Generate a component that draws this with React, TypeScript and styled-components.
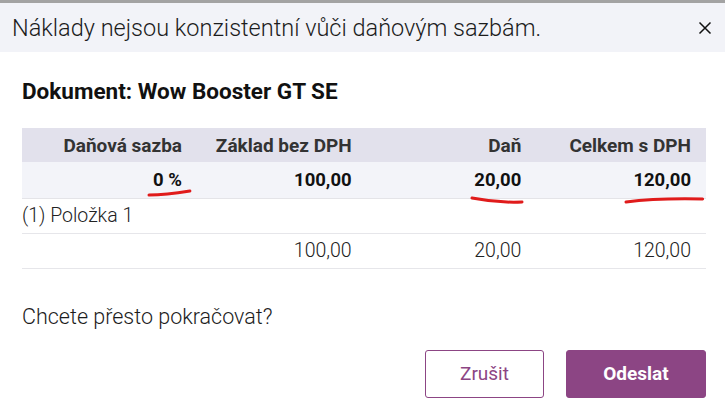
import styled, { createGlobalStyle } from 'styled-components'

const GlobalStyle = createGlobalStyle`
  body {
    margin: 0;
    background: #fff;
    font-family: Roboto, "Liberation Sans", sans-serif;
    color: #222;
  }
`

const Dialog = styled.div`
  width: 725px;
  height: 419px;
  border-top: 3px solid #a3a3a3;
  box-sizing: border-box;
  display: flex;
  flex-direction: column;
`

const Header = styled.div`
  height: 49px;
  background: #f2f3f8;
  display: flex;
  align-items: center;
  justify-content: space-between;
  padding: 0 12px 0 12px;
  h1 {
    margin: 0;
    font-size: 23.5px;
    font-weight: 300;
    color: #1c1c1c;
  }
`

const Close = styled.button`
  border: 0;
  background: transparent;
  padding: 0;
  width: 16px;
  height: 16px;
  display: flex;
  cursor: pointer;
`

const Body = styled.div`
  padding: 25px 19px 0 22px;
  h2 {
    margin: 0 0 22px;
    font-size: 22.5px;
    font-weight: 700;
    color: #111;
    line-height: 29px;
  }
`

const Table = styled.table`
  width: 684px;
  border-collapse: collapse;
  table-layout: fixed;
  td, th {
    text-align: right;
    padding: 0 15px 0 0;
    white-space: nowrap;
  }
  col:first-child { width: 175px; }
`

const HeadRow = styled.tr`
  background: #e2e1ec;
  height: 34px;
  th {
    font-size: 19px;
    font-weight: 700;
    color: #333;
  }
`

const SumRow = styled.tr`
  background: #f3f4f9;
  height: 36px;
  border-bottom: 1px solid #e4e4e8;
  td {
    font-size: 18.5px;
    font-weight: 700;
    color: #111;
  }
`

const Row = styled.tr`
  height: 35px;
  border-bottom: 1px solid #e6e6ea;
  td {
    font-size: 19.5px;
    font-weight: 300;
    color: #222;
  }
`

const ItemCell = styled.td`
  && { text-align: left; padding-left: 0; }
`

const Mark = styled.span<{ $l: number; $r: number; $b: number }>`
  position: relative;
  display: inline-block;
  svg {
    position: absolute;
    left: -${p => p.$l}px;
    bottom: -${p => p.$b}px;
    width: calc(100% + ${p => p.$l + p.$r}px);
    height: 6px;
    overflow: visible;
  }
`

const Question = styled.p`
  margin: 35px 0 0;
  font-size: 21.5px;
  font-weight: 300;
  color: #1c1c1c;
`

const Actions = styled.div`
  display: flex;
  justify-content: flex-end;
  gap: 22px;
  margin-top: 21px;
`

const Button = styled.button<{ $primary?: boolean }>`
  height: 48px;
  width: ${p => (p.$primary ? '140px' : '119px')};
  border-radius: 3px;
  border: 1px solid #8c4584;
  background: ${p => (p.$primary ? '#8c4584' : '#fff')};
  color: ${p => (p.$primary ? '#fff' : '#8c4584')};
  font-family: Roboto, "Liberation Sans", sans-serif;
  font-size: 19px;
  font-weight: ${p => (p.$primary ? 700 : 400)};
  cursor: pointer;
`

function Underline({ bend }: { bend: string }) {
  return (
    <svg viewBox="0 0 100 6" preserveAspectRatio="none">
      <path d={bend} stroke="#e01b1b" strokeWidth="3" fill="none" strokeLinecap="round" vectorEffect="non-scaling-stroke" />
    </svg>
  )
}

export default function App() {
  return (
    <>
      <GlobalStyle />
      <Dialog>
        <Header>
          <h1>Náklady nejsou konzistentní vůči daňovým sazbám.</h1>
          <Close aria-label="zavřít">
            <svg width="16" height="16" viewBox="0 0 16 16">
              <path d="M2.5 2.5 L13.5 13.5 M13.5 2.5 L2.5 13.5" stroke="#111" strokeWidth="1.5" />
            </svg>
          </Close>
        </Header>
        <Body>
          <h2>Dokument: Wow Booster GT SE</h2>
          <Table>
            <colgroup>
              <col />
              <col />
              <col />
              <col />
            </colgroup>
            <thead>
              <HeadRow>
                <th>Daňová sazba</th>
                <th>Základ bez DPH</th>
                <th>Daň</th>
                <th>Celkem s DPH</th>
              </HeadRow>
            </thead>
            <tbody>
              <SumRow>
                <td>
                  <Mark $l={4} $r={8} $b={5}>
                    0 %
                    <Underline bend="M0 5 Q40 5 100 1" />
                  </Mark>
                </td>
                <td>100,00</td>
                <td>
                  <Mark $l={2} $r={1} $b={12}>
                    20,00
                    <Underline bend="M0 1 Q50 6 100 5" />
                  </Mark>
                </td>
                <td>
                  <Mark $l={7} $r={12} $b={12}>
                    120,00
                    <Underline bend="M0 5 Q40 1 100 2" />
                  </Mark>
                </td>
              </SumRow>
              <Row>
                <ItemCell colSpan={4}>(1) Položka 1</ItemCell>
              </Row>
              <Row>
                <td></td>
                <td>100,00</td>
                <td>20,00</td>
                <td>120,00</td>
              </Row>
            </tbody>
          </Table>
          <Question>Chcete přesto pokračovat?</Question>
          <Actions>
            <Button>Zrušit</Button>
            <Button $primary>Odeslat</Button>
          </Actions>
        </Body>
      </Dialog>
    </>
  )
}
